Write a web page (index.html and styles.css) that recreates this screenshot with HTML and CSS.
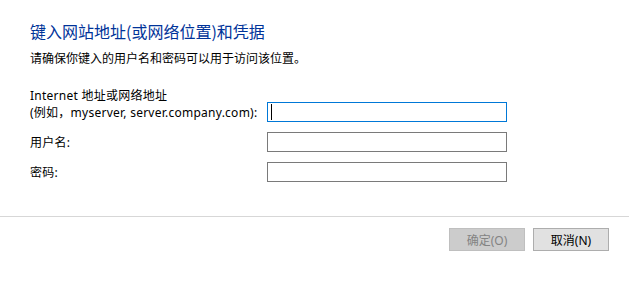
FILE: index.html
```html
<!DOCTYPE html>
<html lang="zh-CN">
<head>
<meta charset="utf-8">
<link rel="stylesheet" href="styles.css">
</head>
<body>
<div class="dialog">
  <div class="content">
    <h1 class="title">键入网站地址(或网络位置)和凭据</h1>
    <p class="desc">请确保你键入的用户名和密码可以用于访问该位置。</p>
    <div class="form">
      <div class="row row-top">
        <label class="label">Internet 地址或网络地址<br>(例如，myserver, server.company.com):</label>
        <div class="field focused"><span class="caret"></span></div>
      </div>
      <div class="row">
        <label class="label">用户名:</label>
        <div class="field"></div>
      </div>
      <div class="row">
        <label class="label">密码:</label>
        <div class="field"></div>
      </div>
    </div>
  </div>
  <div class="footer">
    <button class="btn disabled">确定(O)</button>
    <button class="btn">取消(N)</button>
  </div>
</div>
</body>
</html>
```

FILE: styles.css
```css
html, body {
  margin: 0;
  padding: 0;
  background: #ffffff;
}
body {
  font-family: "Noto Sans", "Noto Sans CJK SC", sans-serif;
  color: #000000;
  width: 629px;
  height: 295px;
  overflow: hidden;
}
.content {
  padding: 20px 30px 0 30px;
  border-bottom: 1px solid #d7d7d7;
  box-sizing: border-box;
  height: 217px;
}
.title {
  margin: 0;
  font-family: "Noto Sans CJK SC", sans-serif;
  font-weight: normal;
  font-size: 16px;
  line-height: 22px;
  color: #003399;
}
.desc {
  margin: 7px 0 0 0;
  font-size: 12px;
  line-height: 20px;
}
.form {
  margin-top: 19px;
  display: flex;
  flex-direction: column;
  gap: 10px;
}
.row {
  display: flex;
  align-items: center;
}
.row-top {
  align-items: flex-end;
}
.label {
  width: 237px;
  font-size: 12px;
  line-height: 17px;
  letter-spacing: 0.25px;
}
.row-top .label {
  position: relative;
  top: -1px;
}
.field {
  width: 240px;
  height: 20px;
  box-sizing: border-box;
  border: 1px solid #7a7a7a;
  display: flex;
  align-items: center;
}
.field.focused {
  border-color: #0078d7;
}
.caret {
  display: block;
  width: 1px;
  height: 16px;
  margin-left: 3px;
  background: #000000;
}
.footer {
  display: flex;
  justify-content: flex-end;
  gap: 8px;
  padding: 11px 20px 0 0;
}
.btn {
  width: 76px;
  height: 23px;
  box-sizing: border-box;
  margin: 0;
  padding: 0;
  font-family: "Noto Sans", "Noto Sans CJK SC", sans-serif;
  font-size: 12px;
  background: #e1e1e1;
  border: 1px solid #adadad;
  color: #000000;
  border-radius: 0;
}
.btn.disabled {
  background: #cccccc;
  border-color: #bfbfbf;
  color: #838383;
}
```
